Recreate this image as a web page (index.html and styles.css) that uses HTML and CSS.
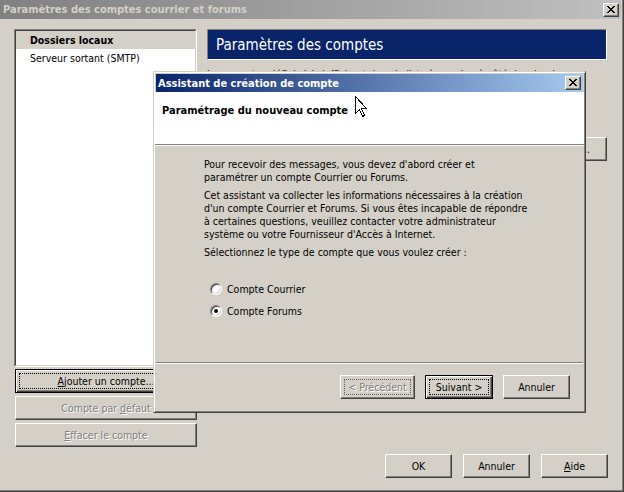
FILE: index.html
```html
<!DOCTYPE html>
<html lang="fr">
<head>
<meta charset="utf-8">
<title>Paramètres des comptes courrier et forums</title>
<link rel="stylesheet" href="styles.css">
</head>
<body>
<div class="win">
  <div class="titlebar">
    <span class="title">Paramètres des comptes courrier et forums</span>
    <span class="closebtn"><svg width="8" height="7" viewBox="0 0 8 7"><path d="M0 0h2v1H0z M6 0h2v1H6z M1 1h2v1H1z M5 1h2v1H5z M2 2h4v1H2z M3 3h2v1H3z M2 4h4v1H2z M1 5h2v1H1z M5 5h2v1H5z M0 6h2v1H0z M6 6h2v1H6z" fill="#000"/></svg></span>
  </div>
  <div class="main">
    <div class="leftcol">
      <div class="list">
        <div class="list-in">
          <div class="item sel">Dossiers locaux</div>
          <div class="item">Serveur sortant (SMTP)</div>
        </div>
      </div>
      <button class="btn wide default focus"><span><u>A</u>jouter un compte...</span></button>
      <button class="btn wide disabled"><span>Compte par <u>d</u>éfaut</span></button>
      <button class="btn wide disabled"><span><u>E</u>ffacer le compte</span></button>
    </div>
    <div class="rightcol">
      <div class="acct-header">Paramètres des comptes</div>
      <p class="intro">Les comptes définis ici s'affichent dans la liste à gauche, à côté des dossiers.</p>
      <div class="edit-row"><button class="btn small">Modifier...</button></div>
    </div>
  </div>
  <div class="footer">
    <button class="btn foot">OK</button>
    <button class="btn foot">Annuler</button>
    <button class="btn foot"><span><u>A</u>ide</span></button>
  </div>

  <div class="dlg">
    <div class="dlg-title">
      <span>Assistant de création de compte</span>
      <span class="closebtn"><svg width="8" height="7" viewBox="0 0 8 7"><path d="M0 0h2v1H0z M6 0h2v1H6z M1 1h2v1H1z M5 1h2v1H5z M2 2h4v1H2z M3 3h2v1H3z M2 4h4v1H2z M1 5h2v1H1z M5 5h2v1H5z M0 6h2v1H0z M6 6h2v1H6z" fill="#000"/></svg></span>
    </div>
    <div class="dlg-head">Paramétrage du nouveau compte</div>
    <div class="dlg-body">
      <p>Pour recevoir des messages, vous devez d'abord créer et<br>paramétrer un compte Courrier ou Forums.</p>
      <p>Cet assistant va collecter les informations nécessaires à la création<br>d'un compte Courrier et Forums. Si vous êtes incapable de répondre<br>à certaines questions, veuillez contacter votre administrateur<br>système ou votre Fournisseur d'Accès à Internet.</p>
      <p>Sélectionnez le type de compte que vous voulez créer :</p>
      <div class="radios">
        <div class="radio"><span class="rb"></span><span>Compte Courrier</span></div>
        <div class="radio"><span class="rb checked"></span><span>Compte Forums</span></div>
      </div>
    </div>
    <div class="dlg-sep"></div>
    <div class="dlg-foot">
      <button class="btn prev disabled focus"><span>&lt; Précédent</span></button>
      <button class="btn next default focus"><span>Suivant &gt;</span></button>
      <button class="btn cancel">Annuler</button>
    </div>
  </div>

  <svg class="cursor" width="13" height="22" viewBox="0 0 13 22"><path d="M0.5 0.5 V17.5 L4.5 13.5 L7.5 20.5 L9.5 19.5 L6.5 12.5 L11.5 12.5 Z" fill="#fff" stroke="#000" stroke-width="1" shape-rendering="crispEdges"/></svg>
</div>
</body>
</html>
```
FILE: styles.css
```css
* { box-sizing: border-box; }
html, body { margin: 0; padding: 0; }
body {
  width: 624px;
  height: 492px;
  overflow: hidden;
  background: #d4d0c8;
  font-family: "DejaVu Sans Condensed", "DejaVu Sans", sans-serif;
  font-stretch: condensed;
  font-size: 10.5px;
  color: #000;
}
.win {
  position: relative;
  width: 624px;
  height: 492px;
  background: #d4d0c8;
  display: flex;
  flex-direction: column;
  border-right: 1px solid #404040;
  border-bottom: 1px solid #404040;
  padding: 0 2px 2px 0;
  box-shadow: inset -1px -1px 0 #808080;
}
.titlebar {
  height: 19px;
  flex: none;
  background: linear-gradient(to right, #808080, #c0c0c0);
  color: #d4d0c8;
  font-weight: bold;
  font-size: 11px;
  display: flex;
  align-items: center;
  justify-content: space-between;
  padding: 0 2px 0 3px;
  margin-bottom: 1px;
}
.closebtn {
  width: 16px;
  height: 14px;
  background: #d4d0c8;
  border: 1px solid;
  border-color: #fff #404040 #404040 #fff;
  box-shadow: inset -1px -1px #808080;
  display: flex;
  align-items: center;
  justify-content: center;
  padding: 0 0 1px 0;
}
.closebtn svg { display: block; }

.main {
  flex: 1;
  display: flex;
  gap: 10px;
  padding: 9px 0 0 14px;
}
.leftcol {
  width: 183px;
  display: flex;
  flex-direction: column;
}
.list {
  height: 338px;
  border: 1px solid;
  border-color: #808080 #fff #fff #808080;
  margin-bottom: 2px;
}
.list-in {
  height: 100%;
  background: #fff;
  border: 1px solid;
  border-color: #404040 #d4d0c8 #d4d0c8 #404040;
}
.item {
  height: 18px;
  padding-left: 14px;
  display: flex;
  align-items: center;
}
.item.sel { background: #d4d0c8; font-weight: bold; }

.btn {
  position: relative;
  font: inherit;
  color: #000;
  background: #d4d0c8;
  border: 1px solid;
  border-color: #fff #404040 #404040 #fff;
  box-shadow: inset -1px -1px #808080;
  height: 24px;
  padding: 0;
  display: flex;
  align-items: center;
  justify-content: center;
}
.btn.default {
  border-color: #000;
  box-shadow: inset 1px 1px #fff, inset -1px -1px #404040, inset -2px -2px #808080;
}
.btn.focus::after {
  content: "";
  position: absolute;
  left: 3px; top: 3px; right: 3px; bottom: 3px;
  border: 1px dotted #000;
}
.btn.disabled { color: #808080; text-shadow: 1px 1px 0 #fff; }
.btn.disabled.focus::after { border-color: #606060; }
.btn.wide { width: 182px; margin: 0 0 3px 1px; }

.rightcol {
  width: 400px;
  display: flex;
  flex-direction: column;
}
.acct-header {
  height: 31px;
  background: #0a246a;
  border: 1px solid;
  border-color: #808080 #fff #fff #808080;
  color: #fff;
  font-size: 15px;
  font-family: "DejaVu Sans", sans-serif;
  font-stretch: condensed;
  padding-left: 8px;
  display: flex;
  align-items: center;
}
.intro { margin: 8px 0 0; line-height: 13px; white-space: nowrap; }
.edit-row {
  display: flex;
  justify-content: flex-end;
  margin-top: 56px;
}
.btn.small { width: 80px; }

.footer {
  flex: none;
  display: flex;
  justify-content: flex-end;
  gap: 11px;
  padding: 0 13px 11px 0;
}
.btn.foot { width: 67px; }

.dlg {
  position: absolute;
  left: 153px;
  top: 71px;
  width: 433px;
  height: 342px;
  background: #d4d0c8;
  border: 1px solid;
  border-color: #d4d0c8 #404040 #404040 #d4d0c8;
  box-shadow: inset 1px 1px #fff, inset -1px -1px #808080;
  padding: 1px;
  display: flex;
  flex-direction: column;
}
.dlg-title {
  height: 18px;
  margin: 1px 1px 0;
  background: linear-gradient(to right, #0a246a, #a6caf0);
  color: #fff;
  font-weight: bold;
  font-size: 11px;
  display: flex;
  align-items: center;
  justify-content: space-between;
  padding: 0 2px 0 2px;
}
.dlg-head {
  height: 53px;
  background: #fff;
  border-bottom: 1px solid #808080;
  box-shadow: 0 1px 0 #fff;
  font-weight: bold;
  font-size: 11px;
  padding: 12px 0 0 7px;
}
.dlg-body {
  flex: 1;
  padding: 13px 10px 0 49px;
}
.dlg-body p { margin: 0 0 5px; line-height: 13px; }
.radios { margin-top: 19px; padding-left: 6px; }
.radio {
  display: flex;
  align-items: center;
  gap: 5px;
  height: 22px;
}
.rb {
  position: relative;
  width: 12px;
  height: 12px;
  border-radius: 50%;
  background: #fff;
  border: 1px solid;
  border-color: #808080 #fff #fff #808080;
  box-shadow: inset 1px 1px #404040, inset -1px -1px #d4d0c8;
  flex: none;
}
.rb.checked::after {
  content: "";
  position: absolute;
  left: 3px; top: 3px;
  width: 4px; height: 4px;
  border-radius: 50%;
  background: #000;
}
.dlg-sep {
  margin: 0 1px;
  border-top: 1px solid #808080;
  border-bottom: 1px solid #fff;
}
.dlg-foot {
  display: flex;
  justify-content: flex-end;
  padding: 11px 14px 12px 0;
}
.dlg-foot .btn { height: 24px; }
.btn.prev { width: 75px; margin-right: 10px; }
.btn.next { width: 68px; margin-right: 10px; }
.btn.cancel { width: 67px; }

.cursor {
  position: absolute;
  left: 355px;
  top: 96px;
}
```
